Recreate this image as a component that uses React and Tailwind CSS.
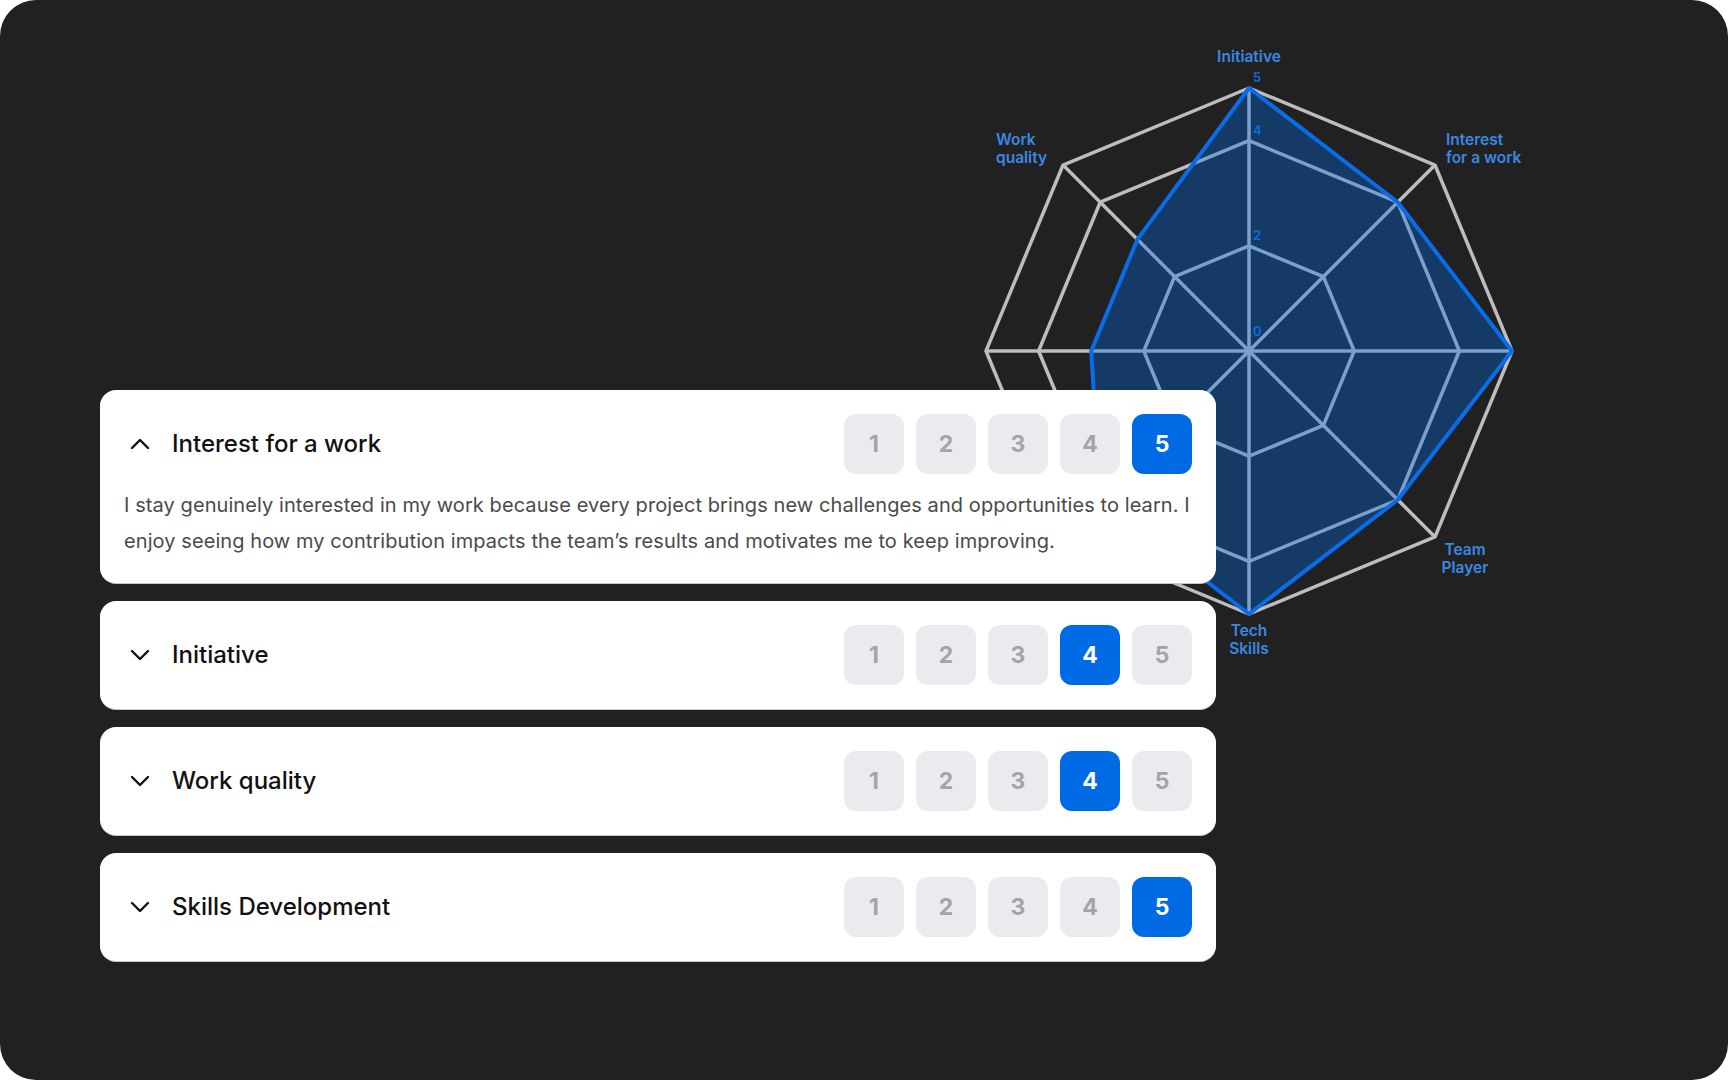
import { ChevronDown, ChevronUp } from 'lucide-react'

const CX = 1249
const CY = 351
const R = 263

// clockwise from the top
const values = [5, 4, 5, 4, 5, 4, 3, 3]

function point(i, level) {
  const a = ((-90 + 45 * i) * Math.PI) / 180
  const r = (R * level) / 5
  return [CX + r * Math.cos(a), CY + r * Math.sin(a)]
}

function ring(level) {
  return values.map((_, i) => point(i, level).join(',')).join(' ')
}

function RadarChart() {
  const data = values.map((v, i) => point(i, v).join(',')).join(' ')
  return (
    <svg
      className="absolute inset-0 pointer-events-none"
      width="1728"
      height="1080"
      viewBox="0 0 1728 1080"
      style={{ fontFamily: 'Inter, "Liberation Sans", sans-serif' }}
    >
      <g stroke="#bdbdbd" strokeWidth="3.5" fill="none" strokeLinejoin="round">
        {[2, 4, 5].map((l) => (
          <polygon key={l} points={ring(l)} />
        ))}
        {values.map((_, i) => {
          const [x, y] = point(i, 5)
          return <line key={i} x1={CX} y1={CY} x2={x} y2={y} />
        })}
      </g>
      <polygon
        points={data}
        fill="#006be6"
        fillOpacity="0.35"
        stroke="#0a6ce6"
        strokeWidth="4"
        strokeLinejoin="round"
      />
      <g fill="#0b6ce2" fontSize="13" fontWeight="600">
        <text x="1253" y="82">5</text>
        <text x="1253" y="135">4</text>
        <text x="1253" y="240">2</text>
        <text x="1253" y="336">0</text>
      </g>
      <g fill="#3b88e2" fontSize="15.5" fontWeight="600">
        <text x={CX} y="62" textAnchor="middle">Initiative</text>
        <text x="1446" y="145">Interest</text>
        <text x="1446" y="163">for a work</text>
        <text x="996" y="145">Work</text>
        <text x="996" y="163">quality</text>
        <text x="1465" y="555" textAnchor="middle">Team</text>
        <text x="1465" y="573" textAnchor="middle">Player</text>
        <text x={CX} y="636" textAnchor="middle">Tech</text>
        <text x={CX} y="654" textAnchor="middle">Skills</text>
      </g>
    </svg>
  )
}

function Score({ value }) {
  return (
    <div className="flex gap-3">
      {[1, 2, 3, 4, 5].map((n) => (
        <div
          key={n}
          className={
            n === value
              ? 'flex h-[60px] w-[60px] items-center justify-center rounded-[12px] bg-[#006ae4] text-[23px] font-bold text-white'
              : 'flex h-[60px] w-[60px] items-center justify-center rounded-[12px] bg-[#ebebef] text-[23px] font-bold text-[#a4a4a8]'
          }
        >
          {n}
        </div>
      ))}
    </div>
  )
}

function Card({ title, value, open, children }) {
  return (
    <div className="rounded-2xl bg-white p-6 shadow-[0_1px_0_0_#c9c9c9]">
      <div className="flex items-center justify-between">
        <div className="flex items-center gap-4">
          {open ? (
            <ChevronUp size={32} strokeWidth={1.8} className="text-[#111]" />
          ) : (
            <ChevronDown size={32} strokeWidth={1.8} className="text-[#111]" />
          )}
          <span className="text-[24px] font-medium text-[#111]">{title}</span>
        </div>
        <Score value={value} />
      </div>
      {children}
    </div>
  )
}

export default function App() {
  return (
    <div className="h-[1080px] w-[1728px] bg-white" style={{ fontFamily: 'Inter, "Liberation Sans", sans-serif' }}>
      <div className="relative h-full w-full overflow-hidden rounded-[36px] bg-[#212121]">
        <RadarChart />
        <div className="relative flex w-[1216px] flex-col gap-[18px] pl-[100px] pt-[390px]">
          <Card title="Interest for a work" value={5} open>
            <p className="mt-[13px] whitespace-nowrap text-[20px] leading-9 tracking-[0.004em] text-[#4a4a4a]">
              I stay genuinely interested in my work because every project brings new challenges and opportunities to learn. I
              <br />
              enjoy seeing how my contribution impacts the team’s results and motivates me to keep improving.
            </p>
          </Card>
          <Card title="Initiative" value={4} />
          <Card title="Work quality" value={4} />
          <Card title="Skills Development" value={5} />
        </div>
      </div>
    </div>
  )
}
